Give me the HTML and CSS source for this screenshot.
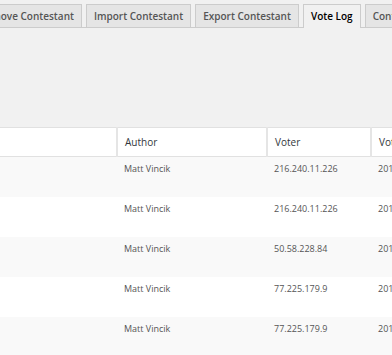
FILE: index.html
```html
<!DOCTYPE html>
<html lang="en">
<head>
    <meta charset="UTF-8">
    <title>Vote Log</title>
    <link rel="stylesheet" href="styles.css">
</head>
<body>
    <div class="nav-tabs">
        <a class="nav-tab">Remove Contestant</a>
        <a class="nav-tab">Import Contestant</a>
        <a class="nav-tab">Export Contestant</a>
        <a class="nav-tab nav-tab-active">Vote Log</a>
        <a class="nav-tab">Contestant Settings</a>
    </div>

    <div class="log-area">
        <table class="vote-table">
            <thead>
                <tr>
                    <th class="col-title"></th>
                    <th class="col-author">Author</th>
                    <th class="col-voter">Voter</th>
                    <th class="col-date">Voted on</th>
                </tr>
            </thead>
            <tbody>
                <tr><td></td><td>Matt Vincik</td><td>216.240.11.226</td><td>2015-04-12</td></tr>
                <tr><td></td><td>Matt Vincik</td><td>216.240.11.226</td><td>2015-04-12</td></tr>
                <tr><td></td><td>Matt Vincik</td><td>50.58.228.84</td><td>2015-04-12</td></tr>
                <tr><td></td><td>Matt Vincik</td><td>77.225.179.9</td><td>2015-04-12</td></tr>
                <tr><td></td><td>Matt Vincik</td><td>77.225.179.9</td><td>2015-04-12</td></tr>
            </tbody>
        </table>
    </div>
</body>
</html>
```

FILE: styles.css
```css
body {
    margin: 0;
    padding: 0;
    background: #f1f1f1;
    color: #444;
    font-family: 'Open Sans', 'Noto Sans', sans-serif;
    overflow: hidden;
}

.nav-tabs {
    display: flex;
    white-space: nowrap;
    margin-left: -33px;
    padding-top: 4px;
    border-bottom: 1px solid #ccc;
}

.nav-tab {
    flex: none;
    margin-left: 4px;
    margin-bottom: -1px;
    padding: 0 7px;
    height: 22px;
    line-height: 22px;
    font-size: 10px;
    font-weight: 600;
    color: #555;
    background: #e5e5e5;
    border: 1px solid #ccc;
    border-bottom: none;
}

.nav-tab-active {
    color: #000;
    background: #f1f1f1;
    height: 23px;
}

.log-area {
    padding-top: 99px;
}

.vote-table {
    border-collapse: collapse;
    table-layout: fixed;
    width: 520px;
    background: #fff;
    border-top: 1px solid #e1e1e1;
}

.vote-table th {
    height: 28px;
    padding: 0 0 0 7px;
    text-align: left;
    font-size: 10px;
    font-weight: 400;
    color: #32373c;
    border-bottom: 1px solid #e1e1e1;
    border-left: 2px solid #e5e5e5;
}

.vote-table th.col-title {
    width: 116px;
    padding: 0;
    border-left: none;
}

.col-author { width: 141px; }
.col-voter { width: 95px; }

.vote-table td {
    height: 40px;
    padding: 5px 0 0 7px;
    box-sizing: border-box;
    vertical-align: top;
    font-size: 9px;
    color: #555;
}

.vote-table td:first-child {
    padding: 0;
}

.vote-table tbody tr:nth-child(odd) {
    background: #f9f9f9;
}
```
